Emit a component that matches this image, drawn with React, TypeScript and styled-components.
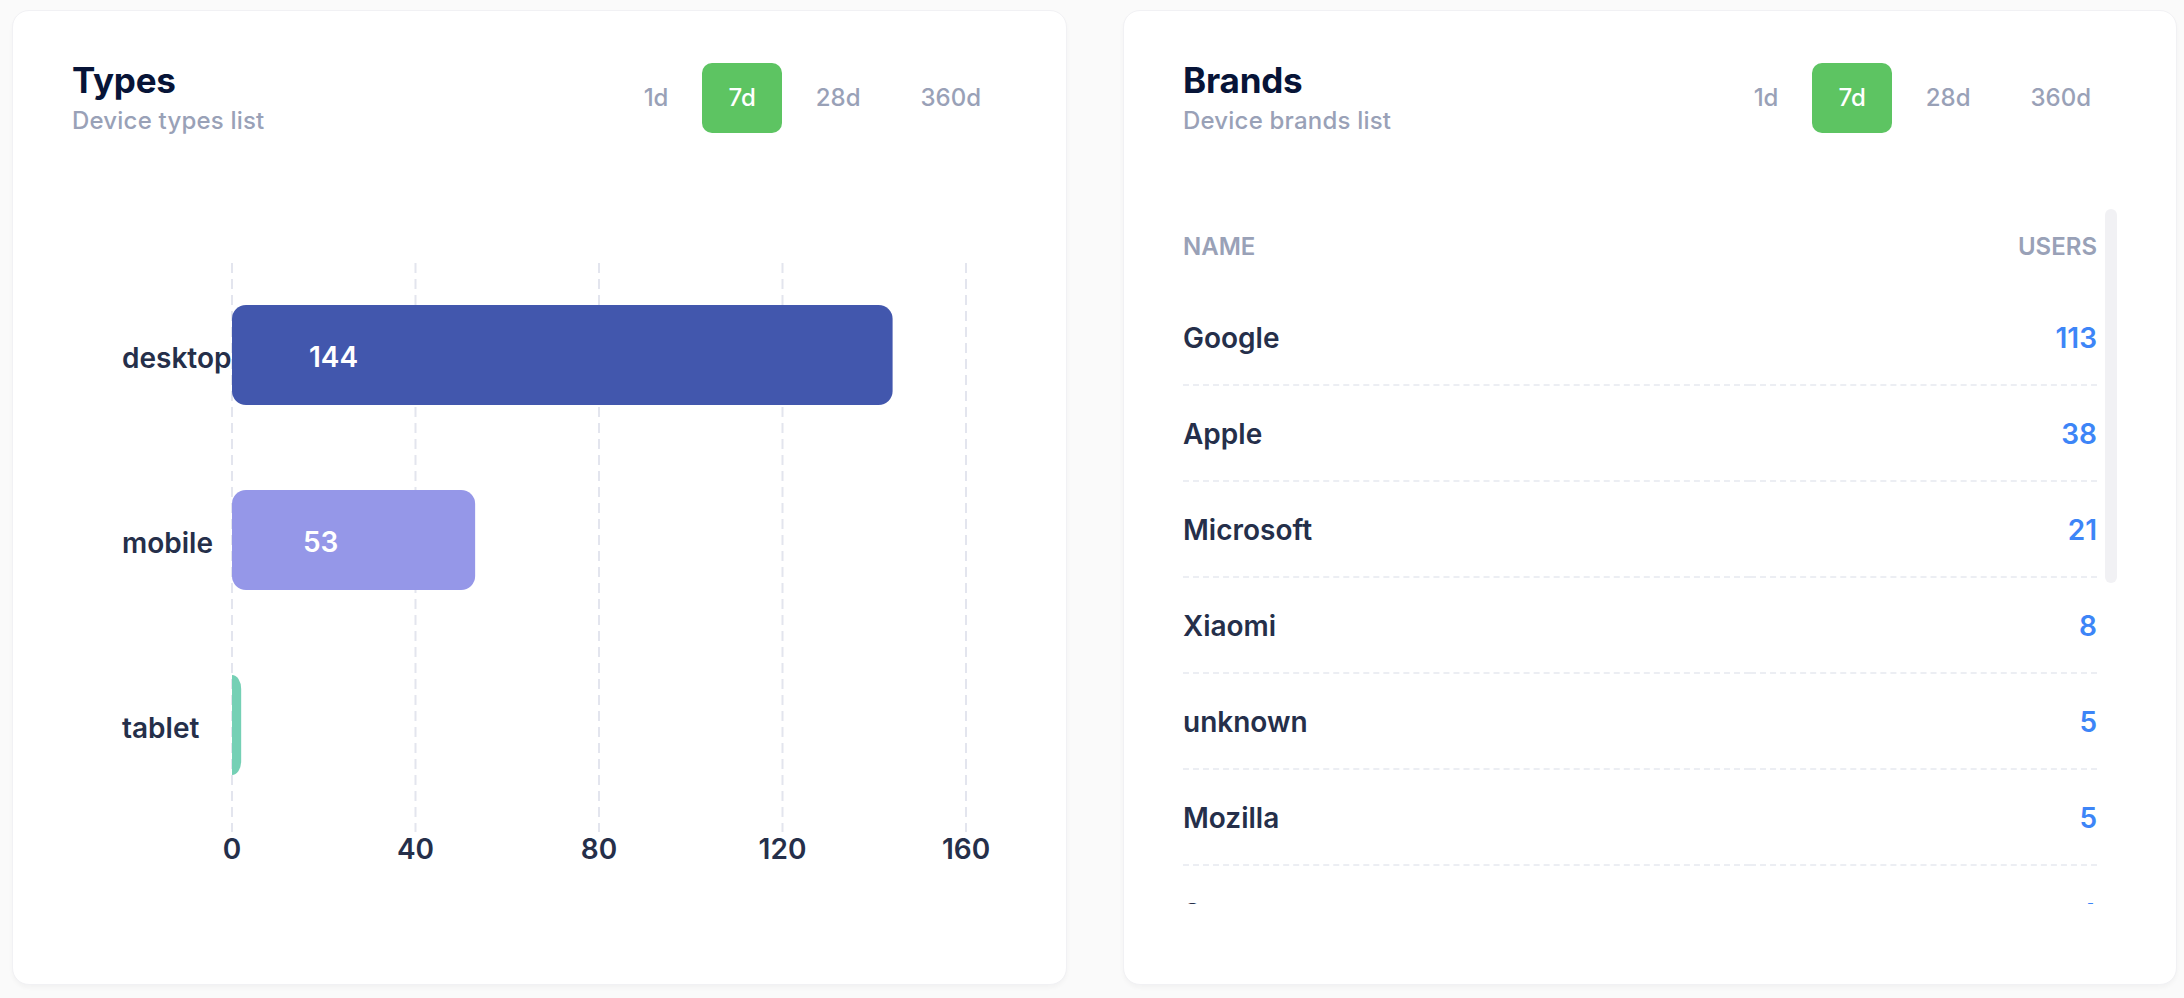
import React from 'react';
import styled, { createGlobalStyle } from 'styled-components';

const GlobalStyle = createGlobalStyle`
  html, body { margin: 0; padding: 0; background: #fafafa; }
  body { font-family: Inter, "Noto Sans", sans-serif; -webkit-font-smoothing: antialiased; }
  *, *::before, *::after { box-sizing: border-box; }
`;

const Page = styled.main`
  display: grid;
  grid-template-columns: 1055px 1054px;
  column-gap: 56px;
  padding: 10px 7px 13px 12px;
  height: 998px;
  overflow: hidden;
`;

const Card = styled.section`
  background: #ffffff;
  border: 1px solid #f1f1f4;
  border-radius: 17px;
  box-shadow: 0 3px 4px 0 rgba(0, 0, 0, 0.03);
  height: 975px;
  padding: 48px 59px 0 59px;
  display: flex;
  flex-direction: column;
`;

const Header = styled.header`
  display: flex;
  align-items: center;
  justify-content: space-between;
  height: 78px;
  flex-shrink: 0;
`;

const TitleBlock = styled.div`
  display: flex;
  flex-direction: column;
`;

const Title = styled.h3`
  margin: 0;
  font-size: 35px;
  line-height: 41px;
  font-weight: 700;
  color: #071437;
  letter-spacing: -0.2px;
`;

const Subtitle = styled.div`
  margin-top: 3px;
  font-size: 24px;
  line-height: 33px;
  font-weight: 500;
  color: #99a1b7;
  letter-spacing: 0.2px;
`;

const Tabs = styled.div`
  display: flex;
  gap: 8px;
`;

const Tab = styled.button<{ $active?: boolean }>`
  height: 70px;
  padding: 0 26px;
  border: 0;
  border-radius: 10px;
  font-family: Inter, "Noto Sans", sans-serif;
  font-size: 24px;
  font-weight: 500;
  line-height: 1;
  cursor: pointer;
  color: ${(p) => (p.$active ? '#ffffff' : '#99a1b7')};
  background: ${(p) => (p.$active ? '#5dc462' : 'transparent')};
`;

/* ---------- chart ---------- */

const ChartWrap = styled.div`
  margin-top: 103px;
  height: 650px;
`;

const ChartSvg = styled.svg`
  display: block;
  width: 100%;
  height: 100%;
  overflow: visible;
`;

const GridLine = styled.line`
  stroke: #e3e5ee;
  stroke-width: 2;
  stroke-dasharray: 10 6;
`;

const CategoryLabel = styled.text`
  font-family: Inter, "Noto Sans", sans-serif;
  font-size: 28px;
  font-weight: 600;
  fill: #252f4a;
`;

const ValueLabel = styled.text`
  font-family: Inter, "Noto Sans", sans-serif;
  font-size: 28px;
  font-weight: 600;
  fill: #ffffff;
`;

const TickLabel = styled.text`
  font-family: Inter, "Noto Sans", sans-serif;
  font-size: 28px;
  font-weight: 600;
  fill: #252f4a;
  text-anchor: middle;
`;

/* ---------- table ---------- */

const ScrollFrame = styled.div`
  position: relative;
  margin-top: 72px;
  height: 695px;
`;

const ScrollViewport = styled.div`
  height: 100%;
  overflow: hidden;
  padding-right: 20px;
`;

const ScrollThumb = styled.div`
  position: absolute;
  top: 0;
  right: 0;
  width: 12px;
  height: 374px;
  border-radius: 6px;
  background: #f1f1f4;
`;

const Table = styled.table`
  width: 100%;
  border-collapse: collapse;
  font-family: Inter, "Noto Sans", sans-serif;
`;

const Th = styled.th<{ $align?: 'left' | 'right' }>`
  padding: 20px 0 25px;
  font-size: 24px;
  line-height: 36px;
  font-weight: 600;
  color: #99a1b7;
  text-transform: uppercase;
  text-align: ${(p) => p.$align || 'left'};
`;

const Td = styled.td<{ $align?: 'left' | 'right'; $value?: boolean }>`
  padding: 27px 0 25px;
  font-size: 28px;
  line-height: 42px;
  font-weight: 600;
  border-bottom: 2px dashed #eceef3;
  text-align: ${(p) => p.$align || 'left'};
  color: ${(p) => (p.$value ? '#3d85f7' : '#252f4a')};
`;

const periods = ['1d', '7d', '28d', '360d'];

const types = [
  { label: 'desktop', value: 144, color: '#4257ad', labelX: 237 },
  { label: 'mobile', value: 53, color: '#9597e8', labelX: 231 },
  { label: 'tablet', value: 2, color: '#75d0b5', labelX: 231 },
];

const brands = [
  { name: 'Google', users: 113 },
  { name: 'Apple', users: 38 },
  { name: 'Microsoft', users: 21 },
  { name: 'Xiaomi', users: 8 },
  { name: 'unknown', users: 5 },
  { name: 'Mozilla', users: 5 },
  { name: 'Samsung', users: 4 },
  { name: 'Huawei', users: 3 },
  { name: 'OnePlus', users: 2 },
  { name: 'Motorola', users: 2 },
  { name: 'OPPO', users: 1 },
  { name: 'Sony', users: 1 },
];

const ticks = [0, 40, 80, 120, 160];
const X0 = 160;
const UNIT = 183.5 / 40;
const BAND = 185;
const BAND_TOP = 22.5;
const BAR_H = 100;
const R = 14;

function Bar({ x, y, w, h, color }: { x: number; y: number; w: number; h: number; color: string }) {
  if (w >= 2 * R) {
    return <rect x={x} y={y} width={w} height={h} rx={R} ry={R} fill={color} />;
  }
  const d = `M ${x} ${y} A ${w} ${R} 0 0 1 ${x + w} ${y + R} L ${x + w} ${y + h - R} A ${w} ${R} 0 0 1 ${x} ${y + h} Z`;
  return <path d={d} fill={color} />;
}

function PeriodTabs() {
  return (
    <Tabs>
      {periods.map((p) => (
        <Tab key={p} $active={p === '7d'}>
          {p}
        </Tab>
      ))}
    </Tabs>
  );
}

function TypesChart() {
  return (
    <ChartWrap>
      <ChartSvg viewBox="0 0 935 650" preserveAspectRatio="xMinYMin meet">
        {ticks.map((t, i) => (
          <GridLine key={t} x1={X0 + i * 183.5} x2={X0 + i * 183.5} y1={23} y2={592} />
        ))}
        {types.map((d, i) => {
          const y = BAND_TOP + i * BAND + (BAND - BAR_H) / 2;
          const w = d.value * UNIT;
          return (
            <g key={d.label}>
              <Bar x={X0} y={y} w={w} h={BAR_H} color={d.color} />
              <CategoryLabel x={50} y={y + BAR_H / 2 + 13}>
                {d.label}
              </CategoryLabel>
              {d.value > 10 && (
                <ValueLabel x={d.labelX} y={y + BAR_H / 2 + 12}>
                  {d.value}
                </ValueLabel>
              )}
            </g>
          );
        })}
        {ticks.map((t, i) => (
          <TickLabel key={t} x={X0 + i * 183.5} y={619}>
            {t}
          </TickLabel>
        ))}
      </ChartSvg>
    </ChartWrap>
  );
}

function BrandsTable() {
  return (
    <ScrollFrame>
      <ScrollViewport>
        <Table>
          <thead>
            <tr>
              <Th $align="left">Name</Th>
              <Th $align="right">Users</Th>
            </tr>
          </thead>
          <tbody>
            {brands.map((b) => (
              <tr key={b.name}>
                <Td $align="left">{b.name}</Td>
                <Td $align="right" $value>
                  {b.users}
                </Td>
              </tr>
            ))}
          </tbody>
        </Table>
      </ScrollViewport>
      <ScrollThumb />
    </ScrollFrame>
  );
}

export default function App() {
  return (
    <>
      <GlobalStyle />
      <Page>
        <Card>
          <Header>
            <TitleBlock>
              <Title>Types</Title>
              <Subtitle>Device types list</Subtitle>
            </TitleBlock>
            <PeriodTabs />
          </Header>
          <TypesChart />
        </Card>
        <Card>
          <Header>
            <TitleBlock>
              <Title>Brands</Title>
              <Subtitle>Device brands list</Subtitle>
            </TitleBlock>
            <PeriodTabs />
          </Header>
          <BrandsTable />
        </Card>
      </Page>
    </>
  );
}
